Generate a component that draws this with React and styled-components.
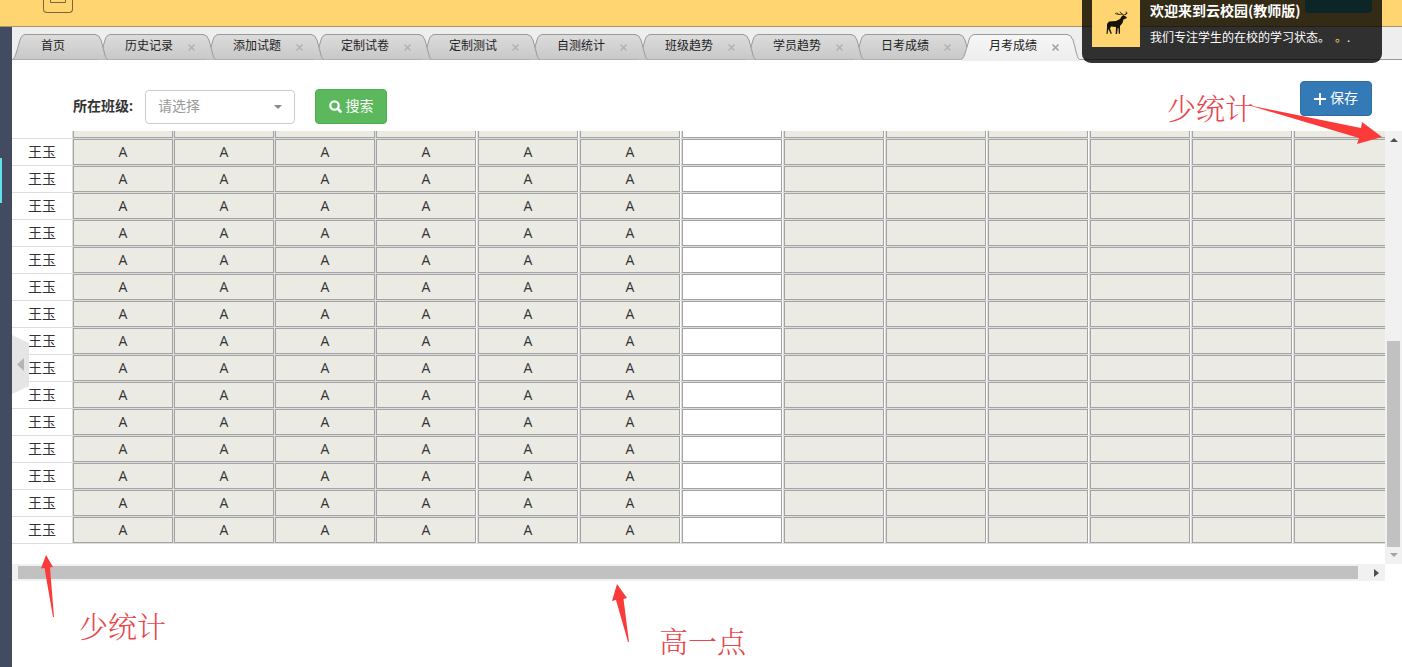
import React from "react";
import styled, { createGlobalStyle } from "styled-components";

const GlobalStyle = createGlobalStyle`
  * { box-sizing: border-box; }
  body {
    margin: 0;
    background: #fff;
    color: #333;
    font: 14px/20px "Open Sans", "Noto Sans CJK SC", sans-serif;
  }
  button, input, select { font: inherit; }
`;

const Page = styled.div`
  position: relative;
  display: flex;
  flex-direction: column;
  min-height: 100vh;
  overflow: hidden;
`;

const TopBar = styled.header`
  height: 27px;
  padding-left: 43px;
  background: #ffd571;
  border-bottom: 1px solid #a8946a;
`;

const MenuButton = styled.button`
  display: flex;
  align-items: flex-start;
  justify-content: center;
  width: 30px;
  height: 13px;
  padding: 0;
  background: none;
  border: 1px solid #7a6538;
  border-top: 0;
  border-radius: 0 0 4px 4px;
`;

const Body = styled.div`
  display: flex;
  flex: 1;
`;

const Sidebar = styled.aside`
  width: 12px;
  padding-top: 131px;
  background: #424b5f;
`;

const ActiveMark = styled.div`
  width: 2px;
  height: 45px;
  background: #5fe3ea;
`;

const Main = styled.main`
  position: relative;
  flex: 1;
  min-width: 0;
`;

const TabBar = styled.nav`
  display: flex;
  height: 33px;
  padding-top: 7px;
  background: #eee;
  border-bottom: 1px solid #999;
`;

const Tab = styled.div`
  position: relative;
  z-index: ${(p) => p.$level};
  display: flex;
  flex: none;
  width: ${(p) => (p.$first ? 96 : 119)}px;
  height: 26px;
  margin-left: ${(p) => (p.$first ? 0 : -11)}px;
  padding-left: ${(p) => (p.$first ? 29 : 28)}px;
  gap: 14px;
`;

const TabShape = styled.svg`
  position: absolute;
  inset: 0;
  z-index: -1;
`;

const TabLink = styled.a`
  color: #222;
  font-size: 12px;
  line-height: 24px;
  text-decoration: none;
`;

const TabClose = styled.button`
  display: flex;
  align-items: center;
  padding: 0;
  background: none;
  border: 0;
  color: ${(p) => (p.$active ? "#a3a3a3" : "#b0b0b0")};
`;

const Toolbar = styled.form`
  display: flex;
  align-items: flex-start;
  justify-content: space-between;
  height: 71px;
  padding: 21px 30px 0 61px;
`;

const Filters = styled.div`
  display: flex;
  align-items: center;
  padding-top: 8px;
`;

const FieldLabel = styled.label`
  margin-right: 12px;
  padding-bottom: 2px;
  font-weight: 700;
`;

const SelectBox = styled.div`
  display: grid;
  align-items: center;
  width: 150px;
  margin-right: 20px;

  & > * { grid-area: 1 / 1; }
  svg { justify-self: end; margin-right: 13px; pointer-events: none; }
`;

const Select = styled.select`
  appearance: none;
  width: 100%;
  height: 34px;
  padding: 0 12px 2px;
  background: #fff;
  border: 1px solid #ccc;
  border-radius: 4px;
  color: #999;
`;

const Button = styled.button`
  display: flex;
  align-items: center;
  justify-content: center;
  gap: 4px;
  width: 72px;
  height: 35px;
  padding: 0;
  background: ${(p) => (p.$kind === "success" ? "#5cb85c" : "#337ab7")};
  border: 1px solid ${(p) => (p.$kind === "success" ? "#4cae4c" : "#2e6da4")};
  border-radius: 4px;
  color: #fff;
`;

const ButtonText = styled.span`
  padding-bottom: 2px;
`;

const ScrollArea = styled.div`
  display: grid;
  grid-template-columns: minmax(0, 1fr) 17px;
  grid-template-rows: calc(100vh - 234px) 17px;
`;

const Viewport = styled.div`
  display: flex;
  flex-direction: column;
  justify-content: flex-end;
  align-items: flex-start;
  padding-bottom: 20px;
  overflow: hidden;
`;

const Grades = styled.table`
  flex: none;
  table-layout: fixed;
  width: 1384px;
  border-collapse: separate;
  border-spacing: 0;
`;

const NameCol = styled.col`
  width: 61px;
`;

const GradeCol = styled.col`
  width: ${(p) => (p.$narrow ? 101 : 102)}px;
`;

const NameCell = styled.th`
  height: 27px;
  padding: 0;
  border-right: 1px solid #ddd;
  border-bottom: 1px solid #ddd;
  font-weight: 400;
  text-align: center;
`;

const GradeCell = styled.td`
  height: 27px;
  padding: 0;
  border-right: 1px solid #ddd;
  border-bottom: 1px solid #ddd;
`;

const GradeInput = styled.input`
  display: block;
  width: 100px;
  height: 26px;
  padding: 0 0 2px;
  background: ${(p) => (p.readOnly ? "#ebebe4" : "#fff")};
  border: 1px solid #a3a3a3;
  border-radius: 0;
  color: #333;
  text-align: center;
`;

const VerticalBar = styled.div`
  display: flex;
  flex-direction: column;
  align-items: center;
  justify-content: space-between;
  padding: 6px 0;
  background: #f1f1f1;
`;

const VerticalThumb = styled.div`
  width: 13px;
  height: 49%;
  margin: auto 0 6px;
  background: #c1c1c1;
`;

const HorizontalBar = styled.div`
  display: flex;
  align-items: center;
  gap: 16px;
  padding: 0 6px;
  background: #f1f1f1;
`;

const HorizontalThumb = styled.div`
  flex: 1;
  height: 13px;
  background: #c1c1c1;
`;

const CollapseHandle = styled.button`
  position: absolute;
  top: 308px;
  left: 0;
  width: 17px;
  height: 59px;
  padding: 0;
  background: none;
  border: 0;
`;

const Toast = styled.div`
  position: absolute;
  top: 0;
  right: 20px;
  z-index: 20;
  display: flex;
  gap: 10px;
  width: 300px;
  height: 63px;
  padding: 0 10px;
  background: rgba(0, 0, 0, 0.8);
  border-radius: 0 0 9px 9px;
  color: #fff;
`;

const ToastLogo = styled.div`
  display: flex;
  flex: none;
  width: 48px;
  height: 47px;
  background: #ffd571;
`;

const ToastTitle = styled.strong`
  display: block;
  font-family: "Noto Sans CJK SC", sans-serif;
  font-size: 14px;
  line-height: 20px;
`;

const ToastText = styled.p`
  margin: 8px 0 0;
  font-size: 12px;
  line-height: 20px;
  text-spacing-trim: space-all;
`;

const Spark = styled.span`
  display: inline-block;
  margin-left: 5px;
  color: #ffd571;
`;

const HiddenAction = styled.div`
  position: absolute;
  top: 0;
  right: 30px;
  width: 67px;
  height: 13px;
  background: #3fb8c4;
  border-radius: 0 0 4px 4px;
`;

const Note = styled.div`
  position: absolute;
  z-index: 10;
  top: ${(p) => p.$top}px;
  left: ${(p) => p.$left};
  color: #e8474c;
  font-family: "Noto Serif CJK SC", "Noto Sans CJK SC", sans-serif;
  font-size: 29px;
  font-weight: 300;
  line-height: 36px;
  white-space: nowrap;
`;

const Arrow = styled.svg`
  position: absolute;
  z-index: 10;
  top: ${(p) => p.$top}px;
  left: ${(p) => p.$left};
  fill: #fb3b3a;
`;

const TABS = [
  "首页", "历史记录", "添加试题", "定制试卷", "定制测试",
  "自测统计", "班级趋势", "学员趋势", "日考成绩", "月考成绩",
];
const COLUMNS = Array.from({ length: 13 }, (_, i) => ({
  graded: i < 6,
  editable: i === 6,
  narrow: i < 3,
}));
const ROWS = [
  { name: "", grade: "" },
  ...Array.from({ length: 15 }, () => ({ name: "王玉", grade: "A" })),
];

function TabItem({ label, index }) {
  const first = index === 0;
  const active = index === TABS.length - 1;
  const w = first ? 96 : 119;
  const outline = `M0.5 25.5 C3 24 4 20 8 6 Q9.500 .5 14 .5 H${w - 13} Q${w - 9} .5 ${w - 7} 6 C${w - 3} 20 ${w - 3} 24 ${w - 0.5} 25.5`;
  return (
    <Tab $first={first} $level={active ? 15 : 12 - index}>
      <TabShape width={w} height="27" viewBox={`0 0 ${w} 27`} aria-hidden="true">
        <defs>
          <linearGradient id={`tab-${index}`} x1="0" y1="0" x2="0" y2="1">
            <stop offset="0" stopColor={active ? "#f6f6f6" : "#dcdcdc"} />
            <stop offset="1" stopColor={active ? "#eee" : "#c8c8c8"} />
          </linearGradient>
        </defs>
        <path d={outline} fill={`url(#tab-${index})`} stroke="#999" />
        {active && <path d="M1 25H118V27H1Z" fill="#eee" />}
      </TabShape>
      <TabLink href="#" aria-current={active ? "page" : undefined}>{label}</TabLink>
      {!first && (
        <TabClose type="button" $active={active} aria-label={`关闭${label}`}>
          <svg width="9" height="9" viewBox="0 0 9 9" stroke="currentColor" strokeWidth={active ? 1.7 : 1.3}>
            <path d="M1.500 1.500 7.500 7.500M7.500 1.500 1.500 7.500" />
          </svg>
        </TabClose>
      )}
    </Tab>
  );
}

function Deer() {
  return (
    <svg width="48" height="47" viewBox="0 0 48 47" fill="#171208" aria-hidden="true">
      <path d="M15 24 L17 21.500 L24 21 L28 19 L29.500 16.500 L31 15.500 L34 16.500 L35 18 L31.500 19.500 L30.500 23 L28 26 L28 33.500 L26.800 34 L26.500 28 L25.800 28 L25 34 L23.700 34 L24 27 L19 26.500 L18 28.500 L19.800 33.500 L18.700 34 L16.500 29 L16 31 L15.500 34 L14.500 34 L15 28 Z" />
      <path d="M31.500 16 L31 14 L27 14.500 L23 13.500 M26.500 14.200 L25 12.500 M30 14.200 L28 11.500 M32 15 L34.500 14 L34 11.500 M33 14.500 L35.500 13" fill="none" stroke="#171208" strokeWidth="0.8" />
    </svg>
  );
}

export default function App() {
  return (
    <Page>
      <GlobalStyle />
      <TopBar>
        <MenuButton type="button" aria-label="菜单">
          <svg width="16" height="4" viewBox="0 0 16 4" fill="none" stroke="#7a6538">
            <path d="M.5 0V2.500H15.500V0" />
          </svg>
        </MenuButton>
      </TopBar>
      <HiddenAction />
      <Body>
        <Sidebar><ActiveMark /></Sidebar>
        <Main>
          <TabBar>
            {TABS.map((label, i) => <TabItem key={label} label={label} index={i} />)}
          </TabBar>
          <Toolbar onSubmit={(e) => e.preventDefault()}>
            <Filters>
              <FieldLabel htmlFor="class">所在班级:</FieldLabel>
              <SelectBox>
                <Select id="class" defaultValue="">
                  <option value="">请选择</option>
                </Select>
                <svg width="8" height="4" viewBox="0 0 8 4" fill="#888"><path d="M0 0H8L4 4Z" /></svg>
              </SelectBox>
              <Button type="submit" $kind="success">
                <svg width="13" height="13" viewBox="0 0 13 13" fill="none" stroke="#fff">
                  <circle cx="5.500" cy="5.500" r="4.200" strokeWidth="2.200" />
                  <path d="M9 9 11.500 11.500" strokeWidth="2.600" strokeLinecap="round" />
                </svg>
                <ButtonText>搜索</ButtonText>
              </Button>
            </Filters>
            <Button type="button" $kind="primary">
              <svg width="12" height="12" viewBox="0 0 12 12" stroke="#fff" strokeWidth="2">
                <path d="M6 0V12M0 6H12" />
              </svg>
              <ButtonText>保存</ButtonText>
            </Button>
          </Toolbar>
          <ScrollArea>
            <Viewport>
              <Grades>
                <colgroup>
                  <NameCol />
                  {COLUMNS.map((c, i) => <GradeCol key={i} $narrow={c.narrow} />)}
                </colgroup>
                <tbody>
                  {ROWS.map((row, r) => (
                    <tr key={r}>
                      <NameCell scope="row">{row.name}</NameCell>
                      {COLUMNS.map((c, i) => (
                        <GradeCell key={i}>
                          <GradeInput
                            aria-label={`${row.name} ${i + 1}`}
                            defaultValue={c.graded ? row.grade : ""}
                            readOnly={!c.editable}
                          />
                        </GradeCell>
                      ))}
                    </tr>
                  ))}
                </tbody>
              </Grades>
            </Viewport>
            <VerticalBar>
              <svg width="8" height="5" viewBox="0 0 8 5" fill="#505050"><path d="M0 5 4 1 8 5Z" /></svg>
              <VerticalThumb />
              <svg width="8" height="5" viewBox="0 0 8 5" fill="#a3a3a3"><path d="M0 0 4 4 8 0Z" /></svg>
            </VerticalBar>
            <HorizontalBar>
              <HorizontalThumb />
              <svg width="5" height="8" viewBox="0 0 5 8" fill="#505050"><path d="M0 0 5 4 0 8Z" /></svg>
            </HorizontalBar>
          </ScrollArea>
          <CollapseHandle type="button" aria-label="收起">
            <svg width="17" height="59" viewBox="0 0 17 59">
              <path d="M0 0 17 8V51L0 59Z" fill="#e5e5e5" />
              <path d="M12 23V36L5 29.500Z" fill="#b5b5b5" />
            </svg>
          </CollapseHandle>
        </Main>
      </Body>

      <Toast role="status">
        <ToastLogo><Deer /></ToastLogo>
        <div>
          <ToastTitle>欢迎来到云校园(教师版)</ToastTitle>
          <ToastText>我们专注学生的在校的学习状态。<Spark>。</Spark>.</ToastText>
        </div>
      </Toast>

      <Note $top={90} $left="calc(100% - 235px)">少统计</Note>
      <Arrow $top={104} $left="calc(100% - 154px)" width="136" height="42" viewBox="0 0 136 42">
        <path d="M0 1 113 24 114 18 134 33 109 40 111 34Z" />
      </Arrow>
      <Note $top={608} $left="79px">少统计</Note>
      <Arrow $top={555} $left="41px" width="14" height="63" viewBox="0 0 14 63">
        <path d="M5 0 12 12 9 12.500 13 62H12L3.500 13 0 13.500Z" />
      </Arrow>
      <Note $top={623} $left="659px">高一点</Note>
      <Arrow $top={584} $left="612px" width="18" height="58" viewBox="0 0 18 58">
        <path d="M5 0 15 14 11.500 15 17 58H16L4 16 0 17Z" />
      </Arrow>
    </Page>
  );
}
